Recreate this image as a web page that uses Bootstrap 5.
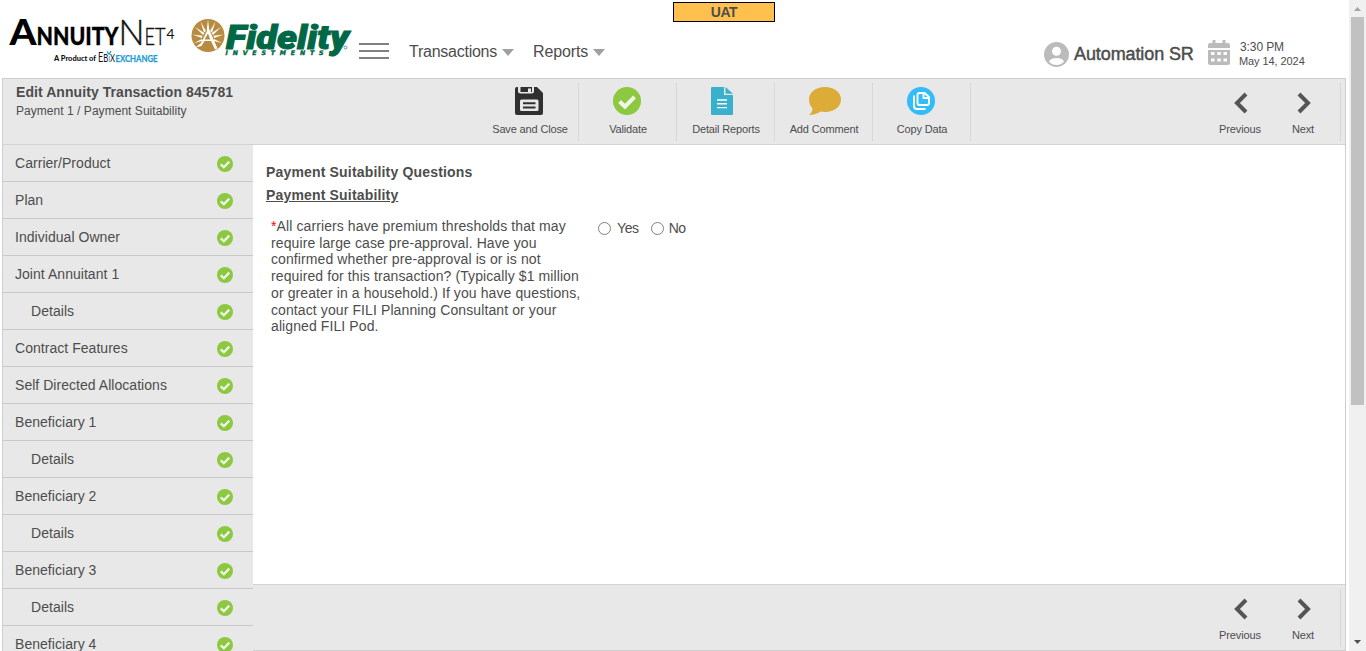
<!DOCTYPE html>
<html lang="en">
<head>
<meta charset="utf-8">
<meta name="viewport" content="width=device-width, initial-scale=1">
<title>AnnuityNet4 - Payment Suitability</title>
<link href="https://cdn.jsdelivr.net/npm/bootstrap@5.3.0/dist/css/bootstrap.min.css" rel="stylesheet">
<style>
body{font-family:"Liberation Sans",Arial,sans-serif;color:#4d4d4d;background:#fff;font-size:14px;line-height:1.2}
svg{display:block;flex:none}
.shell{height:651px}
.top-bar{height:78px}
.logo-ann{margin:14px 0 0 7px;overflow:visible}
.logo-fid{margin:17px 0 0 15px;overflow:visible}
.burger{margin:43px 0 0 8px;width:30px;height:16px;border-top:2px solid #808080;border-bottom:2px solid #808080;padding:5px 0}
.burger span{display:block;height:2px;background:#808080}
.menu-link{font-size:16px;line-height:20px;margin-top:42px;letter-spacing:-.25px}
.menu-link svg{margin-left:1px}
.m1{margin-left:20px;width:124px}
.m2{letter-spacing:-.12px}
.env{left:673px;top:2px;width:102px;height:20px;border:1px solid #000;background:#ffc04d;font-size:14px;line-height:18px;font-weight:700;letter-spacing:-.4px}
.user-box{width:305px}
.user-icon{margin-top:42px}
.user-name{font-size:18px;line-height:22px;margin:43px 0 0 5px;width:119px;-webkit-text-stroke:.45px #4a4a4a;letter-spacing:-.1px}
.cal-icon{margin:40px 0 0 15px}
.clock{font-size:12px;line-height:15px;margin:40px 0 0 10px;letter-spacing:-.1px}
.clock .date{font-size:11px;line-height:13px;margin-left:-1px;letter-spacing:-.08px}
.frame{margin:0 3px 0 2px;border:1px solid #cecece;border-bottom:0}
.tools{height:66px;background:#e8e8e8;border-bottom:1px solid #d3d3d3}
.crumbs{width:478px;padding:6px 0 0 13px}
.crumbs h1{font-size:14px;line-height:15px;font-weight:700;letter-spacing:.07px}
.crumbs p{font-size:12px;line-height:15px;margin-top:4px;letter-spacing:.04px}
.tool{width:98px;font-size:11px;line-height:13px;padding-top:8px;letter-spacing:-.15px}
.tool span{margin-top:8px}
.sep{height:58px;margin:4px 0 0 -1px;border-right:1px solid #d8d8d8}
.edge{margin-right:4px}
.pn{width:44px;padding-top:14px;font-size:11px;line-height:13px;letter-spacing:-.12px}
.pn svg{margin:-1px 0 9px 2px}
.pn-last{margin:0 16px 0 19px}
.side{width:250px;background:#e8e8e8}
.side .item{height:37px;border-bottom:1px solid #c9c9c9;padding:0 20px 0 12px;letter-spacing:.04px}
.side .item.sub{padding-left:28px}
.side .item span{margin-top:1px}
.side .item svg{margin-top:1px}
.main-area{padding:19px 13px 0;height:439px}
.main-area h2,.main-area h3{font-size:14px;line-height:17px;font-weight:700;letter-spacing:.17px}
.main-area h3{padding-top:6px}
.ask{padding-top:14px}
.answers{margin-top:2px;letter-spacing:-.4px}
.question{width:327px;margin:0 0 0 5px;letter-spacing:.1px;line-height:16.7px}
.req{color:red}
.radio{width:13px;height:13px;border:1px solid #808080;background:#fff}
.yes-text{margin:0 12px 0 6px}
.no-text{margin-left:5px}
.bottom-bar{height:67px;background:#e8e8e8;border-top:1px solid #d3d3d3;border-bottom:1px solid #cecece}
.scroll{width:17px;background:#f0f0f0}
.thumb{width:13px;height:388px;background:#c1c1c1}
</style>
</head>
<body>
<svg width="0" height="0" class="position-absolute" aria-hidden="true">
<symbol id="ok" viewBox="0 0 28 28"><circle cx="14" cy="14" r="14" fill="#8cc840"/><path d="M6.500 14.600l5.500 5 9.500-9.800" fill="none" stroke="#f1f6ea" stroke-width="4"/></symbol>
<symbol id="prev" viewBox="0 0 14 22"><path d="M12 2L3 11l9 9" fill="none" stroke="#555" stroke-width="4"/></symbol>
<symbol id="next" viewBox="0 0 14 22"><path d="M2 2l9 9-9 9" fill="none" stroke="#555" stroke-width="4"/></symbol>
<symbol id="tri" viewBox="0 0 12 7"><path d="M0 0h12L6 7z" fill="#a0a0a0"/></symbol>
</svg>
<div class="shell d-flex overflow-hidden">
<div class="flex-grow-1 d-flex flex-column overflow-hidden position-relative">
  <header class="top-bar d-flex align-items-start flex-shrink-0">
    <svg class="logo-ann" width="169" height="50" viewBox="7 14 169 50" font-family="Lato,sans-serif" fill="#111">
      <text x="9.500" y="45" font-size="36" font-weight="900" fill="#000" textLength="27" lengthAdjust="spacingAndGlyphs">A</text>
      <text x="36.500" y="45" font-size="25" font-weight="900" fill="#000" stroke="#000" stroke-width=".3" textLength="82" lengthAdjust="spacingAndGlyphs">NNUITY</text>
      <text x="118.500" y="45" font-size="36" font-weight="300" textLength="26" lengthAdjust="spacingAndGlyphs" stroke="#111" stroke-width=".5">N</text>
      <text x="144.500" y="45" font-size="24" font-weight="300" textLength="21" lengthAdjust="spacingAndGlyphs" stroke="#111" stroke-width=".4">ET</text>
      <text x="166.500" y="38.500" font-size="14" textLength="8" lengthAdjust="spacingAndGlyphs">4</text>
      <text x="54" y="60.500" font-size="7" font-weight="900" textLength="42" lengthAdjust="spacingAndGlyphs">A Product of</text>
      <text x="98" y="62" font-size="13" textLength="17" lengthAdjust="spacingAndGlyphs">E<tspan font-size="11">B</tspan><tspan fill="#1c9ad6" font-size="11">i</tspan><tspan font-size="11">X</tspan></text>
      <text x="115.500" y="62" font-size="9" font-weight="700" fill="#1c9ad6" stroke="#1c9ad6" stroke-width=".25" textLength="42" lengthAdjust="spacingAndGlyphs">EXCHANGE</text>
      <path d="M109 54.500l-2-3M109 54.500l2-3.500" stroke="#1c9ad6" stroke-width="1.300"/>
    </svg>
    <svg class="logo-fid" width="160" height="42" viewBox="191 17 160 42">
      <circle cx="208" cy="35.500" r="16.500" fill="#b98b40"/>
      <g fill="#fff"><path d="M208 19.500l1.300 11h-2.600zM200.500 21.500l5.500 9.500-2 1.500zM215.500 21.500l-5.500 9.500 2 1.500zM195 27l9.500 6-1.500 2zM221 27l-9.500 6 1.500 2zM192.500 34.500l10 1.200-.6 2.200zM223.500 34.500l-10 1.200.6 2.200zM194 43l8-4 .2 2zM222 43l-8-4-.2 2z"/>
      <path d="M208.500 28l9 20.500-2.500 1-4-8.500h-6.500l-3 5-6 1.500 5.500-4.500zM208 33.500l-3.500 6h5.800z" fill-rule="evenodd"/></g>
      <g fill="#006847"><text x="226" y="48.500" font-family="Roboto,sans-serif" font-weight="900" font-style="italic" font-size="32.500" textLength="123" lengthAdjust="spacingAndGlyphs" stroke="#006847" stroke-width="1">Fidelity</text>
      <text x="225.500" y="55.400" font-family="'DejaVu Sans',sans-serif" font-weight="700" font-style="italic" font-size="6.200" textLength="98" lengthAdjust="spacing" stroke="#006847" stroke-width=".4">INVESTMENTS</text></g>
      <circle cx="345.500" cy="47.500" r="1.500" fill="none" stroke="#006847" stroke-width=".6"/>
    </svg>
    <div class="burger"><span></span></div>
    <div class="menu-link m1 d-flex align-items-center gap-1">Transactions <svg width="12" height="7"><use href="#tri"/></svg></div>
    <div class="menu-link m2 d-flex align-items-center gap-1">Reports <svg width="12" height="7"><use href="#tri"/></svg></div>
    <div class="env position-absolute text-center">UAT</div>
    <div class="user-box ms-auto d-flex align-items-start">
      <svg class="user-icon" width="25" height="25" viewBox="0 0 25 25"><circle cx="12.500" cy="12.500" r="12.500" fill="#bbb"/><circle cx="12.500" cy="9.300" r="4.500" fill="#fff"/><path d="M5 19.500q1.500-3.500 7.500-3.500t7.500 3.500Q17 23 12.500 23T5 19.500z" fill="#fff"/></svg>
      <div class="user-name text-nowrap">Automation SR</div>
      <svg class="cal-icon" width="22" height="25" viewBox="0 0 22 25"><path d="M4.500 0h3v3h7V0h3v3H20q2 0 2 2v3H0V5q0-2 2-2h2.500zM0 10h22v13q0 2-2 2H2q-2 0-2-2z" fill="#bbb"/><path d="M3 12h3.500v3H3zM9.300 12h3.500v3H9.300zM15.500 12H19v3h-3.500zM3 18.500h3.500v3H3zM9.300 18.500h3.500v3H9.300zM15.500 18.500H19v3h-3.500z" fill="#fff"/></svg>
      <div class="clock text-nowrap"><div>3:30 PM</div><div class="date">May 14, 2024</div></div>
    </div>
  </header>
  <div class="frame flex-grow-1 d-flex flex-column">
    <div class="tools d-flex flex-shrink-0">
      <div class="crumbs"><h1 class="m-0 text-nowrap">Edit Annuity Transaction 845781</h1><p class="mb-0">Payment 1 / Payment Suitability</p></div>
      <div class="tool d-flex flex-column align-items-center"><svg style="margin-left:-3px" width="28" height="28" viewBox="0 0 28 28"><path d="M2 0h20l6 6v20q0 2-2 2H2q-2 0-2-2V2q0-2 2-2z" fill="#303030"/><path d="M3 0h16v4q0 2.500-2.500 2.500h-11Q3 6.500 3 4z" fill="#e8e8e8"/><path d="M5.500 0H17v5H5.500z" fill="#303030"/><path d="M13 1.500h3v3.500h-3z" fill="#e8e8e8"/><rect x="5" y="12.500" width="18.500" height="11.500" rx="1.500" fill="#e8e8e8"/><path d="M8 16.300h12.500M8 20.500h12.500" stroke="#303030" stroke-width="2"/></svg><span>Save and Close</span></div><div class="sep"></div>
      <div class="tool d-flex flex-column align-items-center"><svg style="margin-left:-2px" width="28" height="28"><use href="#ok"/></svg><span>Validate</span></div><div class="sep"></div>
      <div class="tool d-flex flex-column align-items-center"><svg style="margin-left:-8px" width="22" height="28" viewBox="0 0 22 28"><path d="M1 0h12v8h9v19q0 1-1 1H1q-1 0-1-1V1q0-1 1-1zM14.500 0L22 6.800h-7.500z" fill="#39b1cc"/><path d="M6 13h10M6 16.800h10M6 20.600h10" stroke="#fff" stroke-width="1.400"/></svg><span>Detail Reports</span></div><div class="sep"></div>
      <div class="tool d-flex flex-column align-items-center"><svg style="margin-left:1px" width="32" height="28" viewBox="0 0 32 28"><path d="M16 0c9 0 16 5 16 12.500S25 25 16 25q-2.500 0-4.500-.4Q7 28 0 28q3.500-3 3.500-6.500Q0 17.500 0 12.500C0 5 7 0 16 0z" fill="#dbac37"/></svg><span>Add Comment</span></div><div class="sep"></div>
      <div class="tool d-flex flex-column align-items-center"><svg style="margin-left:-2px" width="28" height="28" viewBox="0 0 28 28"><circle cx="14" cy="14" r="14" fill="#33bdf8"/><g fill="none" stroke="#fff" stroke-width="1.900"><path d="M12.500 6h5l4.500 4v6q0 2-2 2h-7.500q-2 0-2-2V8q0-2 2-2zM16.500 6.500v4.500h5"/><path d="M7 8.500V19q0 3 3 3h8.500"/></g></svg><span>Copy Data</span></div><div class="sep"></div>
      <div class="d-flex ms-auto"><div class="pn d-flex flex-column align-items-center"><svg width="14" height="22"><use href="#prev"/></svg>Previous</div><div class="pn pn-last d-flex flex-column align-items-center"><svg width="14" height="22"><use href="#next"/></svg>Next</div><div class="sep edge"></div></div>
    </div>
    <div class="d-flex flex-grow-1">
      <nav class="side flex-shrink-0" id="side"></nav>
      <main class="flex-grow-1 d-flex flex-column">
        <section class="main-area">
          <h2 class="mb-0">Payment Suitability Questions</h2>
          <h3 class="mb-0 text-decoration-underline">Payment Suitability</h3>
          <div class="ask d-flex align-items-start">
            <p class="question text-nowrap"><span class="req">*</span>All carriers have premium thresholds that may<br>require large case pre-approval. Have you<br>confirmed whether pre-approval is or is not<br>required for this transaction? (Typically $1 million<br>or greater in a household.) If you have questions,<br>contact your FILI Planning Consultant or your<br>aligned FILI Pod.</p>
            <div class="answers d-flex align-items-center"><span class="radio rounded-circle"></span><span class="yes-text">Yes</span><span class="radio rounded-circle"></span><span class="no-text">No</span></div>
          </div>
        </section>
        <footer class="bottom-bar d-flex justify-content-end"><div class="pn d-flex flex-column align-items-center"><svg width="14" height="22"><use href="#prev"/></svg>Previous</div><div class="pn pn-last d-flex flex-column align-items-center"><svg width="14" height="22"><use href="#next"/></svg>Next</div><div class="sep edge"></div></footer>
      </main>
    </div>
  </div>
</div>
<div class="scroll d-flex flex-column align-items-center flex-shrink-0">
  <svg width="17" height="17" viewBox="0 0 17 17"><path d="M5 11l3.500-4 3.500 4z" fill="#a3a3a3"/></svg>
  <div class="thumb"></div>
  <svg class="mt-auto" width="17" height="17" viewBox="0 0 17 17"><path d="M5 6h7l-3.500 4z" fill="#505050"/></svg>
</div>
</div>
<script src="https://cdn.jsdelivr.net/npm/bootstrap@5.3.0/dist/js/bootstrap.bundle.min.js"></script>
<script>
const items=['Carrier/Product','Plan','Individual Owner','Joint Annuitant 1','Details','Contract Features','Self Directed Allocations','Beneficiary 1','Details','Beneficiary 2','Details','Beneficiary 3','Details','Beneficiary 4'];
document.getElementById('side').innerHTML=items.map(t=>`<div class="item d-flex align-items-center justify-content-between${t==='Details'?' sub':''}"><span>${t}</span><svg width="16" height="16"><use href="#ok"/></svg></div>`).join('');
</script>
</body>
</html>
